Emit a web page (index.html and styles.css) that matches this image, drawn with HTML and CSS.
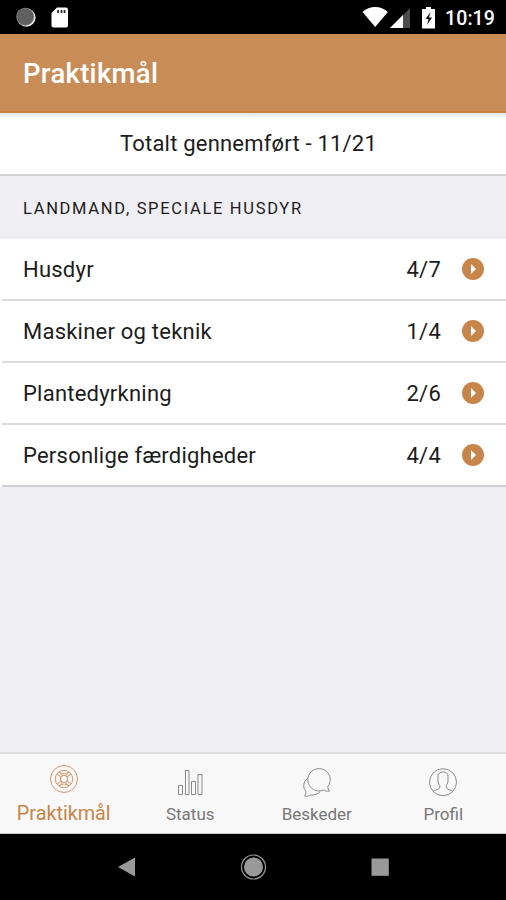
FILE: index.html
```html
<!DOCTYPE html>
<html lang="da">
<head>
<meta charset="utf-8">
<title>Praktikmål</title>
<link rel="stylesheet" href="styles.css">
</head>
<body>
<div class="screen">
  <div class="statusbar">
    <svg class="status-icons" width="506" height="34" viewBox="0 0 506 34">
      <circle cx="26.3" cy="17.5" r="9.3" fill="#eee"/>
      <circle cx="25.2" cy="16.7" r="9" fill="#777"/>
      <circle cx="25.2" cy="16.7" r="8" fill="#606060"/>
      <path d="M57 7.500h9q2 0 2 2v16q0 2-2 2H53.500q-2 0-2-2V13z" fill="#fff"/>
      <path d="M58 10v3M61.500 10v3M64.500 10v3" stroke="#222" stroke-width="1.700"/>
      <path d="M362.500 12q5.500-5 12.700-5t12.600 5L375.200 27z" fill="#fff"/>
      <path d="M410 8v20h-20z" fill="#4d4d4d"/>
      <path d="M403 15v13h-13z" fill="#fff"/>
      <path d="M426 7h5v2h4v19.500h-13V9h4z" fill="#fff"/>
      <path d="M430.500 12l-5 7h3l-1.500 6 5-7.500h-3z" fill="#111"/>
    </svg>
    <span class="clock">10:19</span>
  </div>
  <header class="header"><h1>Praktikmål</h1></header>
  <main class="content">
    <div class="total"><span>Totalt gennemført - 11/21</span></div>
    <h2 class="section">LANDMAND, SPECIALE HUSDYR</h2>
    <ul class="list">
      <li class="row"><span class="name">Husdyr</span><span class="count">4/7</span><svg class="go" viewBox="0 0 22 22"><circle cx="11" cy="11" r="11"/><path d="M9 6v10l5-5z"/></svg></li>
      <li class="row"><span class="name">Maskiner og teknik</span><span class="count">1/4</span><svg class="go" viewBox="0 0 22 22"><circle cx="11" cy="11" r="11"/><path d="M9 6v10l5-5z"/></svg></li>
      <li class="row"><span class="name">Plantedyrkning</span><span class="count">2/6</span><svg class="go" viewBox="0 0 22 22"><circle cx="11" cy="11" r="11"/><path d="M9 6v10l5-5z"/></svg></li>
      <li class="row"><span class="name">Personlige færdigheder</span><span class="count">4/4</span><svg class="go" viewBox="0 0 22 22"><circle cx="11" cy="11" r="11"/><path d="M9 6v10l5-5z"/></svg></li>
    </ul>
  </main>
  <nav class="tabs">
    <a class="tab active">
      <svg viewBox="0 0 30 30"><circle cx="15" cy="15" r="13.500"/><circle cx="15" cy="15" r="8.700"/><circle cx="15" cy="15" r="3.700"/><path d="M8 10l5 3.500M10 8l3.500 4M22 10l-5 3.500M20 8l-3.500 4M8 20l5-3.500M10 22l3.500-4M22 20l-5-3.500M20 22l-3.500-4M10 8q5 4 10 0M10 22q5-4 10 0"/></svg>
      <span>Praktikmål</span>
    </a>
    <a class="tab">
      <svg viewBox="0 0 30 30"><path d="M3.500 18.500h4v9h-4zM10.500 3.500h3.500v24h-3.500zM16.500 14.500h4v13h-4zM23 7.500h4v20h-4z"/></svg>
      <span>Status</span>
    </a>
    <a class="tab">
      <svg viewBox="0 0 30 30"><g transform="translate(.5 .7)"><path d="M27 23.500c-3 .3-4.500-.3-5.700-1.300A11.200 11.200 0 1 1 25.300 19c0 1.800.5 3 1.700 4.500z"/><path d="M5.500 10.500C.5 14 0 20 3.300 23.500c.2 2.200-.2 3.300-1.100 5 3 .2 4.500-.3 6-1.300 4 .5 7-.7 9.300-3.200"/></g></svg>
      <span>Beskeder</span>
    </a>
    <a class="tab">
      <svg viewBox="0 0 30 30"><circle cx="15" cy="15.200" r="13.500"/><path d="M5 24.500c2-2 6.500-1.500 7-4.500 0-2-2-3-2-6V9q0-4 5-4t5 4v5c0 3-2 4-2 6 .5 3 5 2.500 7 4.500"/></svg>
      <span>Profil</span>
    </a>
  </nav>
  <div class="navbar">
    <svg viewBox="0 0 30 30"><path d="M7 15l17-9.500v19z"/></svg>
    <svg viewBox="0 0 30 30"><circle cx="15.500" cy="15" r="9.500"/><circle class="ring" cx="15.500" cy="15" r="12"/></svg>
    <svg viewBox="0 0 30 30"><path d="M6.500 6.500h17.300v17.300H6.500z"/></svg>
  </div>
</div>
</body>
</html>
```

FILE: styles.css
```css
* { box-sizing: border-box; }
body { margin: 0; font-family: Roboto, "Liberation Sans", sans-serif; color: #1c1c1c; }
.screen { width: 506px; height: 900px; display: flex; flex-direction: column; background: #efeef3; overflow: hidden; }
.statusbar { height: 34px; background: #000; display: grid; flex: none; }
.status-icons, .clock { grid-area: 1 / 1; }
.clock { justify-self: end; padding-right: 11px; color: #fff; font-size: 19.500px; font-weight: 500; line-height: 37px; letter-spacing: .1px; }
.header { height: 79px; flex: none; background: #c88c56; border-bottom: 2px solid #c7813f; padding-left: 23px; }
.header h1 { margin: 0; color: #fff; font-size: 27.500px; font-weight: 500; line-height: 80px; letter-spacing: .3px; }
.content { flex: 1; }
.total { height: 63px; background: linear-gradient(#e4e4e6, #fff 5px); border-bottom: 2px solid #d2d2d4; text-align: center; font-size: 22px; line-height: 61px; padding-right: 9px; letter-spacing: .2px; }
.section { margin: 0; height: 63px; padding-left: 23px; font-size: 16.500px; font-weight: 400; letter-spacing: 1.680px; line-height: 65px; }
.list { margin: 0; padding: 0; list-style: none; background: #fff; }
.row { height: 62px; display: flex; align-items: center; padding: 0 22px 0 21px; margin-left: 2px; border-bottom: 2px solid #dcdcde; font-size: 22px; letter-spacing: .23px; }
.row:last-child { border-bottom-color: #cfcfd2; }
.name { flex: 1; }
.count { margin-right: 21px; }
.go { width: 22px; height: 22px; fill: #c88549; }
.go path { fill: #fff; }
.tabs { height: 82px; flex: none; display: grid; grid-template-columns: repeat(4, 1fr); background: #f8f8f8; border-top: 2px solid #dfdfe2; border-bottom: 1px solid #ccc; }
.tab { display: flex; flex-direction: column; align-items: center; color: #777; font-size: 17px; padding: 13px 0 0 1px; }
.tab svg { width: 30px; height: 30px; fill: none; stroke: #8b8b8b; stroke-width: 1; flex: none; }
.tab span { line-height: 24px; margin-top: 5px; }
.tab.active { color: #c88549; font-size: 19.800px; padding-top: 10px; }
.tab.active svg { stroke: #d19a6a; }
.tab.active span { margin-top: 8px; }
.navbar { height: 66px; flex: none; background: #000; display: flex; justify-content: center; align-items: center; gap: 97px; }
.navbar svg { width: 30px; height: 30px; fill: #999; }
.navbar .ring { fill: none; stroke: #999; stroke-width: 1.200; }
```
